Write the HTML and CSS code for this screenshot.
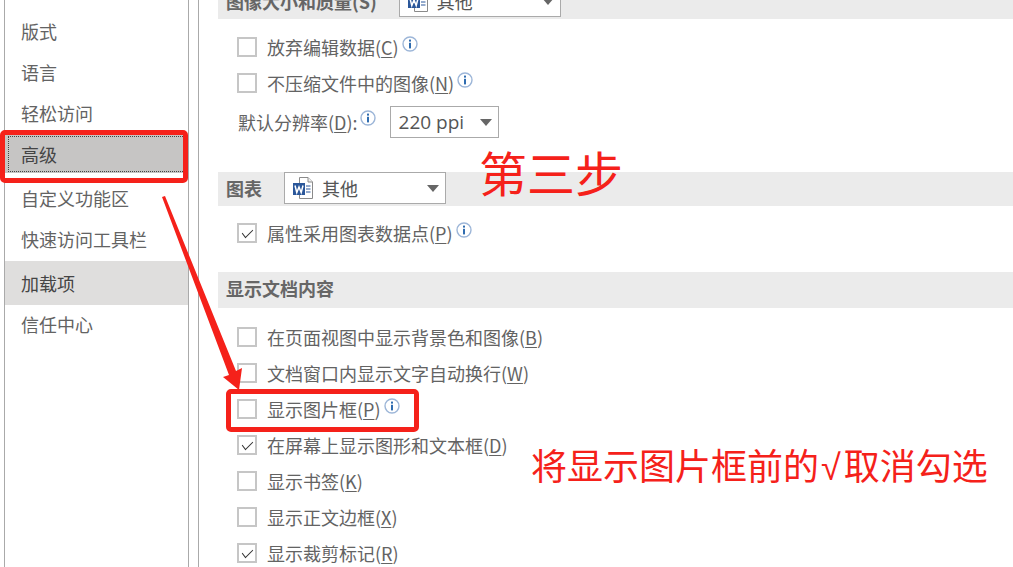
FILE: index.html
```html
<!DOCTYPE html>
<html lang="zh-CN">
<head>
    <meta charset="UTF-8">
    <meta name="viewport" content="width=device-width, initial-scale=1.0">
    <title>Word 选项 - 高级</title>
    <link rel="stylesheet" href="styles.css">
</head>
<body>
    <svg class="defs">
        <defs>
            <symbol id="word" viewBox="0 0 20 22">
                <path d="M6.5 .5H15L19.5 5V21.5H6.5Z" fill="#fff" stroke="#8a8a8a"/>
                <path d="M15 .5V5H19.5" fill="#eee" stroke="#8a8a8a"/>
                <path d="M13 9H17.5M13 12H17.5M13 15H17.5" stroke="#2b579a" stroke-width="1"/>
                <rect x="0" y="6" width="12" height="12" fill="#2b579a"/>
                <path d="M2 8.5L3.8 15.5L6 10L8.2 15.5L10 8.5" fill="none" stroke="#fff" stroke-width="1.5"/>
            </symbol>
            <symbol id="info" viewBox="0 0 16 16">
                <circle cx="8" cy="8" r="7" fill="#fff" stroke="#9db6d8" stroke-width="1.4"/>
                <rect x="7" y="3.6" width="2" height="2" fill="#2f6cb0"/>
                <rect x="7" y="6.8" width="2" height="5.6" fill="#2f6cb0"/>
            </symbol>
        </defs>
    </svg>

    <div class="app">
        <!-- 左侧菜单 -->
        <nav class="nav">
            <a class="item">版式</a>
            <a class="item">语言</a>
            <a class="item">轻松访问</a>
            <a class="item on"><span>高级</span></a>
            <a class="item">自定义功能区</a>
            <a class="item">快速访问工具栏</a>
            <a class="item hover">加载项</a>
            <a class="item">信任中心</a>
        </nav>

        <!-- 右侧设置 -->
        <main class="main">
            <div class="bar first">
                <b>图像大小和质量(S)</b>
                <div class="sel w162"><svg class="doc"><use href="#word"/></svg>其他<i class="caret"></i></div>
            </div>
            <div class="body top">
                <div class="row"><i class="cb"></i><span>放弃编辑数据(<u>C</u>)</span><svg class="tip"><use href="#info"/></svg></div>
                <div class="row"><i class="cb"></i><span>不压缩文件中的图像(<u>N</u>)</span><svg class="tip"><use href="#info"/></svg></div>
                <div class="row tall">
                    <span class="lbl">默认分辨率(<u>D</u>):</span><svg class="tip"><use href="#info"/></svg>
                    <div class="sel ppi">220 ppi<i class="caret"></i></div>
                </div>
            </div>

            <div class="bar chart">
                <b>图表</b>
                <div class="sel w162"><svg class="doc"><use href="#word"/></svg>其他<i class="caret"></i></div>
            </div>
            <div class="body mid">
                <div class="row"><i class="cb ck"></i><span>属性采用图表数据点(<u>P</u>)</span><svg class="tip"><use href="#info"/></svg></div>
            </div>

            <div class="bar wide"><b>显示文档内容</b></div>
            <div class="body">
                <div class="row"><i class="cb"></i><span>在页面视图中显示背景色和图像(<u>B</u>)</span></div>
                <div class="row"><i class="cb"></i><span>文档窗口内显示文字自动换行(<u>W</u>)</span></div>
                <div class="row"><i class="cb"></i><span>显示图片框(<u>P</u>)</span><svg class="tip"><use href="#info"/></svg></div>
                <div class="row"><i class="cb ck"></i><span>在屏幕上显示图形和文本框(<u>D</u>)</span></div>
                <div class="row"><i class="cb"></i><span>显示书签(<u>K</u>)</span></div>
                <div class="row"><i class="cb"></i><span>显示正文边框(<u>X</u>)</span></div>
                <div class="row"><i class="cb ck"></i><span>显示裁剪标记(<u>R</u>)</span></div>
            </div>
        </main>
    </div>

    <!-- 截图上的红色标注 -->
    <div class="mark m1"></div>
    <div class="mark m2"></div>
    <svg class="arrow" width="1013" height="567">
        <polygon points="162,197 165,196 236,371 242,368 239,390 223,377 229,375" fill="#f5211a"/>
    </svg>
    <div class="note n1">第三步</div>
    <div class="note n2">将显示图片框前的<span class="root">√</span>取消勾选</div>
</body>
</html>
```

FILE: styles.css
```css
html,body{
    margin: 0;
    padding: 0;
}
body{
    width: 1013px;
    height: 567px;
    overflow: hidden;
    position: relative;
    background: #fff;
    color: #636363;
    font-family: "Noto Sans CJK SC", "Noto Sans", sans-serif;
    font-size: 18px;
}
.defs{
    position: absolute;
    width: 0;
    height: 0;
}
.app{
    display: flex;
    height: 567px;
}

/* 左侧菜单 */
.nav{
    box-sizing: border-box;
    width: 185px;
    margin-left: 4px;
    padding-top: 10px;
    border-left: 1px solid #aaa;
    border-right: 1px solid #aaa;
}
.item{
    display: flex;
    align-items: center;
    height: 41px;
    padding-left: 16px;
}
.item.on{
    height: 38px;
    margin: 2px 0 4px;
    padding: 0 0 0 3px;
    background: #c6c5c4;
    color: #444;
}
.item.on span{
    flex: 1;
    height: 34px;
    line-height: 34px;
    padding-left: 12px;
    border: 1px dotted #444;
    margin-right: 3px;
}
.item.hover{
    height: 44px;
    margin: 2px 0 -2px;
    background: #dfdedd;
    color: #444;
}

/* 设置区 */
.main{
    flex: 1;
    margin-left: 9px;
    padding-left: 19px;
    border-left: 1px solid #aaa;
}
.bar{
    box-sizing: border-box;
    display: flex;
    align-items: center;
    height: 34px;
    padding: 0 0 2px 8px;
    background: #ebebeb;
}
.bar.wide{
    height: 36px;
    padding-bottom: 4px;
}
.bar b{
    font-weight: 700;
    color: #666;
}
.bar.first{
    margin-top: -15px;
}
.bar .sel{
    margin-left: 22px;
}
.body{
    padding: 11px 0 0 19px;
}
.body.top{
    padding-top: 10px;
    padding-bottom: 34px;
}
.body.mid{
    padding-top: 9px;
    padding-bottom: 21px;
}
.row{
    display: flex;
    align-items: center;
    height: 36px;
    white-space: nowrap;
}
.row.tall{
    height: 33px;
    margin-top: 4px;
}
.row u{
    text-underline-offset: 2px;
    text-decoration-thickness: 1px;
}

/* 复选框 */
.cb{
    box-sizing: border-box;
    flex: none;
    position: relative;
    width: 20px;
    height: 20px;
    margin-right: 10px;
    border: 2px solid #c6c6c6;
    background: #fff;
}
.cb.ck::after{
    content: "";
    position: absolute;
    left: 3px;
    top: 1px;
    width: 10px;
    height: 5px;
    border-left: 1.6px solid #333;
    border-bottom: 1.6px solid #333;
    transform: translateY(3px) rotate(-45deg) skewX(-8deg);
}
.lbl{
    margin-left: 1px;
}
.tip{
    flex: none;
    width: 16px;
    height: 16px;
    margin: -7px 0 0 3px;
}
.tall .tip{
    margin-left: 2px;
}

/* 下拉框 */
.sel{
    box-sizing: border-box;
    position: relative;
    display: flex;
    align-items: center;
    height: 32px;
    background: #fff;
    border: 1px solid #aaa;
    color: #555;
    font-size: 18px;
    font-weight: 400;
}
.w162{
    width: 162px;
    flex: none;
}
.doc{
    width: 20px;
    height: 22px;
    margin: 0 9px 0 8px;
}
.ppi{
    width: 109px;
    height: 32px;
    margin-left: 14px;
    padding-left: 8px;
    font-family: "Open Sans", sans-serif;
    font-size: 19px;
}
.caret{
    position: absolute;
    right: 6px;
    top: 12px;
    border-left: 6px solid transparent;
    border-right: 6px solid transparent;
    border-top: 7px solid #666;
}

/* 红色标注 */
.mark{
    position: absolute;
    box-sizing: border-box;
    border: 5px solid #f5211a;
    border-radius: 5px;
}
.m1{
    left: 0;
    top: 130px;
    width: 188px;
    height: 53px;
}
.m2{
    left: 226px;
    top: 389px;
    width: 193px;
    height: 43px;
}
.arrow{
    position: absolute;
    left: 0;
    top: 0;
}
.note{
    position: absolute;
    color: #f5211a;
    white-space: nowrap;
}
.n1{
    left: 479px;
    top: 137px;
    font-size: 48px;
    line-height: 68px;
}
.n2{
    left: 531px;
    top: 438px;
    font-size: 36px;
    line-height: 52px;
}
.root{
    margin: 0 3px 0 2px;
    font-family: "Liberation Sans", sans-serif;
}
```
